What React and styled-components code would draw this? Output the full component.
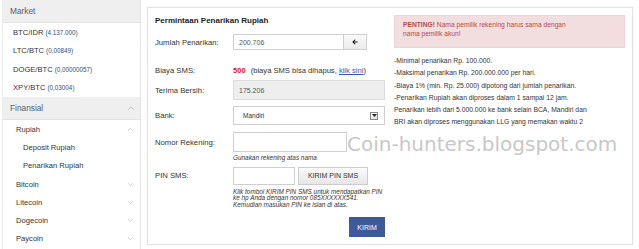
import React from "react";
import styled, { createGlobalStyle } from "styled-components";
import { ChevronUp, ChevronDown } from "lucide-react";
import { FaArrowLeft } from "react-icons/fa";

const GlobalStyle = createGlobalStyle`
  body {
    margin: 0;
    background: #fff;
    font-family: "Liberation Sans", Arial, sans-serif;
    color: #333;
  }
`;

const markets = [
  ["BTC/IDR", "4.137.000"],
  ["LTC/BTC", "0,00849"],
  ["DOGE/BTC", "0,00000057"],
  ["XPY/BTC", "0,03004"],
];

const rules = [
  "-Minimal penarikan Rp. 100.000.",
  "-Maksimal penarikan Rp. 200.000.000 per hari.",
  "-Biaya 1% (min. Rp. 25.000) dipotong dari jumlah penarikan.",
  "-Penarikan Rupiah akan diproses dalam 1 sampai 12 jam.",
  "Penarikan lebih dari 5.000.000 ke bank selain BCA, Mandiri dan",
  "BRI akan diproses menggunakan LLG yang memakan waktu 2",
];

export default function App() {
  return (
    <>
      <GlobalStyle />
      <Page>
        <Sidebar>
          <SideHeader>Market</SideHeader>
          <MarketList>
            {markets.map(([pair, price]) => (
              <MarketItem key={pair}>
                {pair} <Price>({price})</Price>
              </MarketItem>
            ))}
          </MarketList>
          <SideHeader>
            Finansial
            <ChevronUp size={10} strokeWidth={1.5} color="#9aa5b0" />
          </SideHeader>
          <MenuItem>
            Rupiah
            <ChevronUp size={9} strokeWidth={1.5} color="#a8b2bc" />
          </MenuItem>
          <MenuItem $sub>Deposit Rupiah</MenuItem>
          <MenuItem $sub>Penarikan Rupiah</MenuItem>
          {["Bitcoin", "Litecoin", "Dogecoin", "Paycoin"].map((c) => (
            <MenuItem key={c}>
              {c}
              <ChevronDown size={9} strokeWidth={1.5} color="#a8b2bc" />
            </MenuItem>
          ))}
        </Sidebar>

        <Panel>
          <FormCol>
            <Title>Permintaan Penarikan Rupiah</Title>

            <Row $mt={8} $h={16}>
              <Label>Jumlah Penarikan:</Label>
              <Group>
                <Input $w={111}>200.706</Input>
                <IconButton>
                  <FaArrowLeft size={6} color="#111" />
                </IconButton>
              </Group>
            </Row>

            <Row $mt={12} $h={16}>
              <Label>Biaya SMS:</Label>
              <Fee>
                <b>500</b>
                <span>
                  (biaya SMS bisa dihapus, <a href="#">klik sini</a>)
                </span>
              </Fee>
            </Row>

            <Row $mt={2} $h={20}>
              <Label>Terima Bersih:</Label>
              <Input $w={152} $readonly>175.206</Input>
            </Row>

            <Row $mt={6} $h={19}>
              <Label>Bank:</Label>
              <Select>
                Mandiri
                <SelectArrow>
                  <svg width="5" height="3" viewBox="0 0 5 3">
                    <path d="M0 0h5L2.5 3z" fill="#222" />
                  </svg>
                </SelectArrow>
              </Select>
            </Row>

            <Row $mt={7} $h={20}>
              <Label>Nomor Rekening:</Label>
              <Input $w={114} />
            </Row>
            <Hint $mt={3}>Gunakan rekening atas nama</Hint>

            <Row $mt={5} $h={18}>
              <Label>PIN SMS:</Label>
              <Group $gap={3}>
                <Input $w={62} />
                <GrayButton>KIRIM PIN SMS</GrayButton>
              </Group>
            </Row>
            <Hint $mt={4}>
              Klik tombol KIRIM PIN SMS untuk mendapatkan PIN
              <br />
              ke hp Anda dengan nomor 085XXXXXX541.
              <br />
              Kemudian masukan PIN ke isian di atas.
            </Hint>

            <Submit>
              <PrimaryButton>KIRIM</PrimaryButton>
            </Submit>
          </FormCol>

          <InfoCol>
            <Alert>
              <b>PENTING!</b> Nama pemilik rekening harus sama dengan
              <br />
              nama pemilik akun!
            </Alert>
            <Rules>
              {rules.map((r) => (
                <li key={r}>{r}</li>
              ))}
            </Rules>
          </InfoCol>
        </Panel>

        <Watermark>Coin-hunters.blogspot.com</Watermark>
      </Page>
    </>
  );
}

const Page = styled.div`
  position: relative;
  display: flex;
  align-items: flex-start;
  width: 639px;
  height: 249px;
  overflow: hidden;
`;

const Sidebar = styled.aside`
  width: 139px;
  height: 249px;
  margin-left: 2px;
  border-left: 1px solid #ececec;
  border-right: 1px solid #e4e4e4;
  box-sizing: border-box;
  flex-shrink: 0;
`;

const SideHeader = styled.div`
  height: 23px;
  display: flex;
  align-items: center;
  justify-content: space-between;
  padding: 0 4px 0 7px;
  background: #efefef;
  border-bottom: 1px solid #e3e3e3;
  box-sizing: border-box;
  font-size: 8.3px;
  color: #50606f;
`;

const MarketList = styled.ul`
  list-style: none;
  margin: 0;
  padding: 0;
`;

const MarketItem = styled.li`
  height: 18.5px;
  display: flex;
  align-items: center;
  gap: 2px;
  padding-left: 10px;
  font-size: 7.6px;
  color: #333;
`;

const Price = styled.span`
  font-size: 6.3px;
  color: #2f4f80;
`;

const MenuItem = styled.div`
  height: 18.3px;
  display: flex;
  align-items: center;
  justify-content: space-between;
  padding: 0 5px 0 ${(p) => (p.$sub ? 20 : 13)}px;
  font-size: 7.6px;
  color: #333;
`;

const Panel = styled.section`
  display: flex;
  width: 486px;
  height: 238px;
  margin: 7px 0 0 6px;
  padding: 0 7px;
  box-sizing: border-box;
  border: 1px solid #e2e2e2;
  box-shadow: 0 0 2px rgba(0, 0, 0, 0.05);
  flex-shrink: 0;
`;

const FormCol = styled.div`
  width: 230px;
  flex-shrink: 0;
  display: flex;
  flex-direction: column;
`;

const Title = styled.h3`
  margin: 8px 0 0;
  font-size: 8px;
  line-height: 10px;
  font-weight: bold;
  color: #222;
`;

const Row = styled.div`
  display: grid;
  grid-template-columns: 78px 1fr;
  align-items: center;
  height: ${(p) => p.$h}px;
  margin-top: ${(p) => p.$mt}px;
`;

const Label = styled.span`
  font-size: 7.7px;
  color: #333;
`;

const Group = styled.div`
  display: flex;
  height: 100%;
  gap: ${(p) => p.$gap || 0}px;
`;

const Input = styled.div`
  width: ${(p) => p.$w}px;
  height: 100%;
  box-sizing: border-box;
  display: flex;
  align-items: center;
  padding-left: 5px;
  border: 1px solid ${(p) => (p.$readonly ? "#dcdcdc" : "#cfcfcf")};
  background: ${(p) => (p.$readonly ? "#eeeeee" : "#fff")};
  font-size: 7px;
  color: #555;
`;

const IconButton = styled.div`
  width: 23px;
  height: 100%;
  box-sizing: border-box;
  display: flex;
  align-items: center;
  justify-content: center;
  border: 1px solid #cfcfcf;
  border-left: none;
  background: linear-gradient(#fafafa, #ececec);
`;

const Fee = styled.div`
  display: flex;
  align-items: center;
  gap: 5px;
  font-size: 7.6px;
  color: #333;
  white-space: nowrap;

  b {
    color: #e8141c;
  }

  a {
    color: #2a5db0;
  }
`;

const Select = styled.div`
  width: 152px;
  height: 100%;
  box-sizing: border-box;
  display: flex;
  align-items: center;
  justify-content: space-between;
  padding: 0 6px 0 9px;
  border: 1px solid #cfcfcf;
  font-size: 6.5px;
  color: #333;
`;

const SelectArrow = styled.span`
  width: 8px;
  height: 8px;
  box-sizing: border-box;
  display: flex;
  align-items: center;
  justify-content: center;
  border: 1px solid #8a8a8a;
  background: linear-gradient(#fdfdfd, #e2e2e2);
`;

const Hint = styled.p`
  margin: ${(p) => p.$mt}px 0 0 78px;
  font-size: 6.4px;
  line-height: 6.6px;
  font-style: italic;
  color: #333;
  white-space: nowrap;
`;

const GrayButton = styled.div`
  width: 70px;
  height: 100%;
  box-sizing: border-box;
  display: flex;
  align-items: center;
  justify-content: center;
  border: 1px solid #cccccc;
  background: linear-gradient(#fbfbfb, #e6e6e6);
  font-size: 7px;
  color: #333;
`;

const Submit = styled.div`
  display: flex;
  justify-content: flex-end;
  margin-top: 9px;
`;

const PrimaryButton = styled.div`
  width: 36px;
  height: 20px;
  display: flex;
  align-items: center;
  justify-content: center;
  background: #3d5a99;
  font-size: 7px;
  color: #fff;
`;

const InfoCol = styled.div`
  width: 231px;
  margin-left: 9px;
  flex-shrink: 0;
`;

const Alert = styled.div`
  height: 33px;
  margin-top: 7px;
  padding: 5px 8px 0;
  box-sizing: border-box;
  background: #f2dede;
  border: 1px solid #eed3d7;
  font-size: 6.7px;
  line-height: 8.6px;
  color: #b94a48;
  white-space: nowrap;
`;

const Rules = styled.ul`
  list-style: none;
  margin: 7px 0 0;
  padding: 0;
  font-size: 6.8px;
  line-height: 12.3px;
  color: #333;
  white-space: nowrap;
`;

const Watermark = styled.div`
  position: absolute;
  left: 347px;
  top: 131px;
  padding-right: 6px;
  background: #fff;
  font-family: "DejaVu Sans", sans-serif;
  font-size: 20px;
  line-height: 26px;
  color: #c8c8c8;
`;
